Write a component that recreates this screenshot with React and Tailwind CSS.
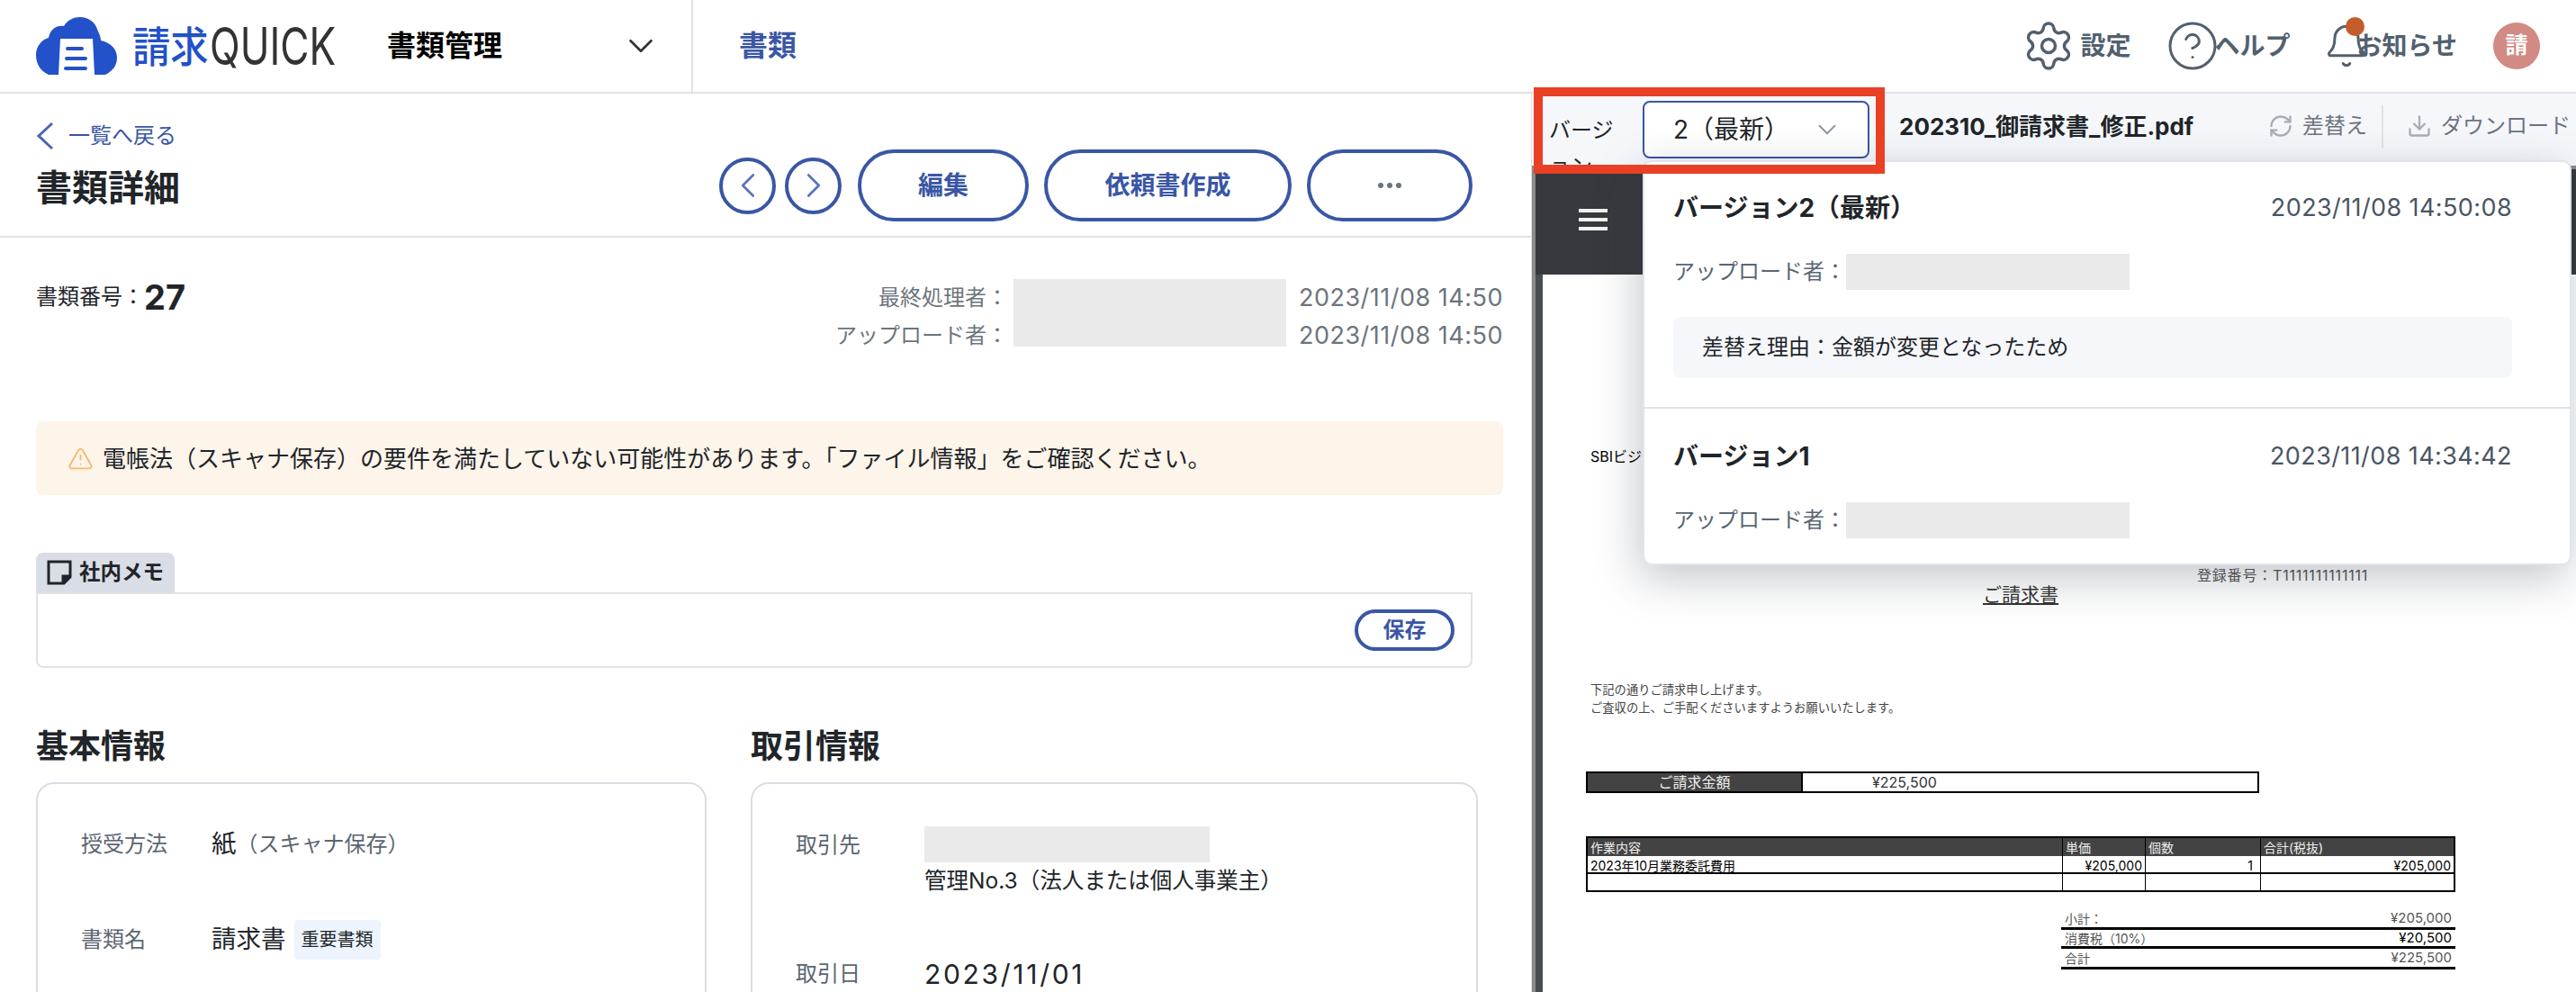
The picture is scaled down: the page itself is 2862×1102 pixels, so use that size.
import { ChevronDown, ChevronLeft, ChevronRight, CircleHelp, Bell, Settings, RefreshCw, Download, TriangleAlert } from 'lucide-react';

const font = "font-['Inter','Noto_Sans_CJK_JP',sans-serif]";

const Logo = () => (
  <div className="flex items-center">
    <svg className="h-[64px] w-[90px]" viewBox="0 0 90 64">
      <path fill="#2251c9" d="M14 64C5 60 0 52 0 42c0-9 6-17 14-19 2-10 9-14 17-13C35 3 42 0 49 0c9 0 17 5 20 16 2 4 3 7 3 10 10 2 18 9 18 19 0 9-5 15-13 19z" />
      <path fill="#fff" d="M27 24h36l2 40H25z" />
      <path stroke="#2251c9" strokeWidth="4" strokeLinecap="round" d="M35 35h16M34 46h21M33 57h22" />
    </svg>
    <span className="ml-[17px] origin-left scale-x-[0.9] text-[47px] leading-none font-medium text-[#2251c9]">請求</span>
    <span className="-ml-[8px] origin-left scale-x-[0.76] font-normal text-[58px] leading-none text-[#333]">QUICK</span>
  </div>
);

const Header = () => (
  <header className="flex h-[104px] border-b-2 border-[#dfe2e6] bg-white">
    <div className="flex w-[770px] items-center border-r-2 border-[#dfe2e6] pl-[40px] pr-[33px]">
      <div className="w-[390px]"><Logo /></div>
      <span className="text-[32px] font-bold text-black">書類管理</span>
      <ChevronDown className="ml-auto size-[46px] text-[#333]" strokeWidth={1.4} />
    </div>
    <div className="flex items-center pl-[51px] text-[32px] font-bold text-[#3a56a5]">書類</div>
    <div className="ml-auto flex items-center pr-[40px] text-[28px] font-bold text-[#52606f]">
      <Settings className="size-[60px]" strokeWidth={1.4} />
      <span className="ml-[6px]">設定</span>
      <CircleHelp className="ml-[38px] size-[60px]" strokeWidth={1.2} />
      <span className="-ml-[5px]">ヘルプ</span>
      <div className="relative ml-[36px] size-[52px]">
        <Bell className="size-[52px]" strokeWidth={1.4} />
        <div className="absolute -top-[6px] left-[25px] size-[21px] rounded-full bg-[#c45c2b]" />
      </div>
      <span className="-ml-[14px]">お知らせ</span>
      <div className="ml-[40px] flex size-[52px] items-center justify-center rounded-full bg-[#d28a84] text-[25px] text-white">請</div>
    </div>
  </header>
);

const PillButton = ({ className, children }) => (
  <button className={`flex h-[80px] items-center justify-center rounded-full border-[4px] border-[#3a56a5] text-[28px] font-bold text-[#3a56a5] ${className}`}>
    {children}
  </button>
);

const RoundButton = ({ children }) => (
  <button className="flex size-[63px] items-center justify-center rounded-full border-[4px] border-[#3a56a5] text-[#5a74bb]">
    {children}
  </button>
);

const PageHead = () => (
  <div className="flex h-[160px] items-start justify-between border-b-2 border-[#dfe2e6] pl-[40px] pr-[65px]">
    <div className="pt-[30px]">
      <div className="flex h-[34px] items-center text-[24px] text-[#3a56a5]">
        <svg className="h-[32px] w-[20px]" viewBox="0 0 20 32" fill="none" stroke="#4a66b3" strokeWidth="3">
          <path d="M18 2L3 16l15 14" />
        </svg>
        <span className="ml-[16px]">一覧へ戻る</span>
      </div>
      <h1 className="mt-[17px] text-[40px] leading-[48px] font-bold text-[#212529]">書類詳細</h1>
    </div>
    <div className="flex items-center gap-[10px] pt-[62px]">
      <RoundButton><ChevronLeft className="size-[46px]" strokeWidth={1.4} /></RoundButton>
      <RoundButton><ChevronRight className="size-[46px]" strokeWidth={1.4} /></RoundButton>
      <PillButton className="ml-[8px] w-[190px]">編集</PillButton>
      <PillButton className="ml-[7px] w-[275px]">依頼書作成</PillButton>
      <PillButton className="ml-[7px] w-[184px]">
        <span className="flex gap-[4px]">
          <i className="size-[6px] rounded-full bg-[#6b7480]" />
          <i className="size-[6px] rounded-full bg-[#6b7480]" />
          <i className="size-[6px] rounded-full bg-[#6b7480]" />
        </span>
      </PillButton>
    </div>
  </div>
);

const Redacted = ({ className }) => <div className={`bg-[#eaeaea] ${className}`} />;

const DocMeta = () => (
  <div className="flex items-start justify-between pt-[46px]">
    <div className="flex items-center pt-[2px] text-[#212529]">
      <span className="text-[24px]">書類番号：</span>
      <span className="text-[38px] leading-[36px] font-bold">27</span>
    </div>
    <div className="flex text-[24px] text-[#6c757d]">
      <div className="pr-[6px] text-right leading-[42px]">
        <div>最終処理者：</div>
        <div>アップロード者：</div>
      </div>
      <Redacted className="h-[75px] w-[303px]" />
      <div className="pl-[14px] text-[27px] leading-[42px] tracking-[0.5px]">
        <div>2023/11/08 14:50</div>
        <div>2023/11/08 14:50</div>
      </div>
    </div>
  </div>
);

const Memo = () => (
  <div className="mr-[34px] mt-[64px]">
    <div className="flex h-[44px] w-[154px] items-center rounded-t-lg bg-[#d9dde6] pl-[12px] text-[23.5px] font-bold text-[#212529]">
      <svg className="size-[28px]" viewBox="0 0 28 28" fill="none" stroke="#212529" strokeWidth="3">
        <path d="M2 2h24v17l-7 7H2z" />
        <path d="M26 18h-8v8" fill="#212529" />
      </svg>
      <span className="ml-[8px]">社内メモ</span>
    </div>
    <div className="flex h-[84px] items-center justify-end rounded-b-lg border-2 border-[#dfe2e6] pr-[18px]">
      <button className="h-[46px] w-[111px] rounded-full border-[4px] border-[#3a56a5] text-[24px] font-bold text-[#3a56a5]">保存</button>
    </div>
  </div>
);

const InfoCard = ({ title, className, children }) => (
  <section className={className}>
    <h2 className="text-[36px] leading-[36px] font-bold text-[#212529]">{title}</h2>
    <div className="mt-[22px] h-[400px] rounded-[20px] border-2 border-[#d9dde4] pl-[48px] pt-[47px]">
      {children}
    </div>
  </section>
);

const InfoSections = () => (
  <div className="mt-[69px] flex gap-[49px]">
    <InfoCard title="基本情報" className="w-[745px]">
      <div className="flex h-[40px] items-center">
        <span className="w-[145px] text-[24px] text-[#5a6672]">授受方法</span>
        <span className="text-[27.5px] text-[#212529]">紙</span>
        <span className="text-[24px] text-[#5a6672]">（スキャナ保存）</span>
      </div>
      <div className="mt-[66px] flex h-[40px] items-center">
        <span className="w-[145px] text-[24px] text-[#5a6672]">書類名</span>
        <span className="text-[27.5px] text-[#212529]">請求書</span>
        <span className="ml-[9px] flex h-[44px] w-[96px] items-center justify-center rounded bg-[#edf4fd] text-[20px] text-[#212529]">重要書類</span>
      </div>
    </InfoCard>
    <InfoCard title="取引情報" className="w-[808px]">
      <div className="flex">
        <span className="w-[143px] pt-[1px] text-[24px] leading-[40px] text-[#5a6672]">取引先</span>
        <div>
          <Redacted className="h-[40px] w-[317px]" />
          <div className="mt-[2px] text-[24.5px] leading-[36px] text-[#212529]">管理No.3（法人または個人事業主）</div>
        </div>
      </div>
      <div className="mt-[68px] flex items-center">
        <span className="w-[143px] text-[24px] text-[#5a6672]">取引日</span>
        <span className="text-[30px] leading-[30px] tracking-[2.7px] text-[#212529]">2023/11/01</span>
      </div>
    </InfoCard>
  </div>
);

const LeftPane = () => (
  <div className="h-[998px] w-[1701px] shrink-0 overflow-hidden">
    <PageHead />
    <div className="pl-[40px] pr-[31px]">
      <DocMeta />
      <div className="mt-[74px] flex h-[82px] items-center rounded-lg bg-[#fdf4ea] pl-[35px] text-[26px] text-[#212529]">
        <TriangleAlert className="size-[29px] text-[#f5b66a]" strokeWidth={1.5} />
        <span className="ml-[10px]">電帳法（スキャナ保存）の要件を満たしていない可能性があります。「ファイル情報」をご確認ください。</span>
      </div>
      <Memo />
      <InfoSections />
    </div>
  </div>
);

const Toolbar = () => (
  <div className="flex h-[80px] bg-[#f5f7fb] pl-[19px] text-[24px] text-[#6b7480]">
    <div className="w-[104px] pt-[21px] leading-[40px] text-[#212529]">バージ<br />ョン</div>
    <div className="mt-[8px] flex h-[64px] w-[252px] items-center rounded-lg border-2 border-[#3a56a5] bg-white pl-[32px] pr-[28px] text-[28px] text-[#212529]">
      2（最新）
      <ChevronDown className="ml-auto size-[34px] text-[#8a929c]" strokeWidth={1.3} />
    </div>
    <div className="flex h-[72px] flex-1 items-center">
      <span className="ml-[33px] text-[26px] font-bold text-[#212529]">202310_御請求書_修正.pdf</span>
      <RefreshCw className="ml-auto size-[28px] text-[#a8aeb6]" strokeWidth={2} />
      <span className="ml-[10px]">差替え</span>
      <div className="ml-[16px] h-[47px] w-[2px] bg-[#dfe2e6]" />
      <Download className="ml-[26px] size-[28px] text-[#a8aeb6]" strokeWidth={2} />
      <span className="ml-[10px] mr-[6px]">ダウンロード</span>
    </div>
  </div>
);

const VersionCard = ({ title, date, children, className }) => (
  <div className={className}>
    <div className="flex items-start justify-between">
      <span className="text-[28px] leading-[36px] font-bold text-[#212529]">{title}</span>
      <span className="text-[27px] leading-[36px] tracking-[0.4px] text-[#4a5563]">{date}</span>
    </div>
    {children}
  </div>
);

const Uploader = () => (
  <div className="mt-[33px] flex items-center text-[24px] text-[#5a6672]">
    アップロード者：
    <Redacted className="h-[40px] w-[315px]" />
  </div>
);

const VersionDropdown = () => (
  <div className="absolute left-[119px] top-[-10px] z-10 h-[450px] w-[1032px] rounded-[10px] border-2 border-[#e0e4ea] bg-white shadow-[-4px_14px_50px_rgba(40,50,70,0.28)]">
    <VersionCard title="バージョン2（最新）" date="2023/11/08 14:50:08" className="h-[274px] border-b-2 border-[#dfe2e6] pl-[32px] pr-[64px] pt-[33px]">
      <Uploader />
      <div className="mt-[30px] flex h-[68px] items-center rounded-lg bg-[#f6f7fb] pl-[32px] text-[24px] text-[#212529]">差替え理由：金額が変更となったため</div>
    </VersionCard>
    <VersionCard title="バージョン1" date="2023/11/08 14:34:42" className="pl-[32px] pr-[64px] pt-[35px]">
      <Uploader />
    </VersionCard>
  </div>
);

const cell = 'border-black flex h-full items-center';

const InvoicePage = () => (
  <div className="relative h-[800px] flex-1 bg-white pl-[48px] text-black">
    <div className="pt-[190px] pl-[5px] text-[16px]">SBIビジ</div>
    <div className="mt-[110px] pl-[679px] text-[16px] leading-[20px] tracking-[0.8px] text-[#555]">登録番号：T1111111111111</div>
    <div className="-mt-[3px] pl-[441px] text-[21px] leading-[30px] text-[#333] underline">ご請求書</div>
    <div className="mt-[80px] pl-[5px] text-[13.3px] leading-[20px] text-[#444]">
      <div>下記の通りご請求申し上げます。</div>
      <div>ご査収の上、ご手配くださいますようお願いいたします。</div>
    </div>
    <div className="mt-[61px] flex h-[24px] w-[748px] border-2 border-black text-[16px]">
      <div className="flex w-[237px] items-center justify-center bg-[#434343] text-[#eee]">ご請求金額</div>
      <div className="flex items-center border-l-2 border-black pl-[77px] text-[#333]">¥225,500</div>
    </div>
    <div className="mt-[48px] w-[966px] border-2 border-black text-[14px]">
      <div className="grid h-[20px] grid-cols-[527px_92px_128px_1fr] bg-[#434343] text-[#eee]">
        <div className={`${cell} pl-[3px]`}>作業内容</div>
        <div className={`${cell} border-l pl-[3px]`}>単価</div>
        <div className={`${cell} border-l pl-[3px]`}>個数</div>
        <div className={`${cell} border-l pl-[3px]`}>合計(税抜)</div>
      </div>
      <div className="grid h-[20px] grid-cols-[527px_92px_128px_1fr] border-b-2 border-black">
        <div className={`${cell} pl-[3px]`}>2023年10月業務委託費用</div>
        <div className={`${cell} justify-end border-l pr-[3px]`}>¥205,000</div>
        <div className={`${cell} justify-end border-l pr-[8px]`}>1</div>
        <div className={`${cell} justify-end border-l pr-[3px]`}>¥205,000</div>
      </div>
      <div className="grid h-[18px] grid-cols-[527px_92px_128px_1fr]">
        <div />
        <div className={`${cell} border-l`} />
        <div className={`${cell} border-l`} />
        <div className={`${cell} border-l`} />
      </div>
    </div>
    <div className="ml-[528px] mt-[20px] w-[438px] text-[15px] text-[#555]">
      <div className="flex h-[22px] items-center justify-between border-b-[3px] border-black px-[4px]"><span className="text-[14px]">小計：</span><span>¥205,000</span></div>
      <div className="flex h-[21px] items-center justify-between border-b-[3px] border-black px-[4px]"><span className="text-[14px]">消費税（10%）</span><span className="text-black">¥20,500</span></div>
      <div className="flex h-[23px] items-center justify-between border-b-[3px] border-black px-[4px]"><span className="text-[14px]">合計</span><span>¥225,500</span></div>
    </div>
  </div>
);

const RightPane = () => (
  <div className="h-[998px] flex-1 overflow-hidden border-l border-[#dfe2e6]">
    <Toolbar />
    <div className="relative border-l-4 border-t-4 border-[#8a8a8a] bg-[#4a4d50]">
      <div className="flex h-[117px] items-start bg-[#36393d] pl-[48px] pt-[44px]">
        <svg className="h-[24px] w-[32px]" viewBox="0 0 32 24" fill="#f2f2f2">
          <rect width="32" height="4" />
          <rect y="10" width="32" height="4" />
          <rect y="20" width="32" height="4" />
        </svg>
      </div>
      <div className="flex pl-[8px]">
        <InvoicePage />
      </div>
      <VersionDropdown />
    </div>
  </div>
);

export default function App() {
  return (
    <div className={`${font} relative h-[1102px] w-[2862px] overflow-hidden bg-white`}>
      <Header />
      <div className="flex">
        <LeftPane />
        <RightPane />
      </div>
      {/* annotation frame */}
      <div className="absolute left-[1704px] top-[97px] z-20 h-[96px] w-[390px] border-[10px] border-[#ea4025]" />
    </div>
  );
}
